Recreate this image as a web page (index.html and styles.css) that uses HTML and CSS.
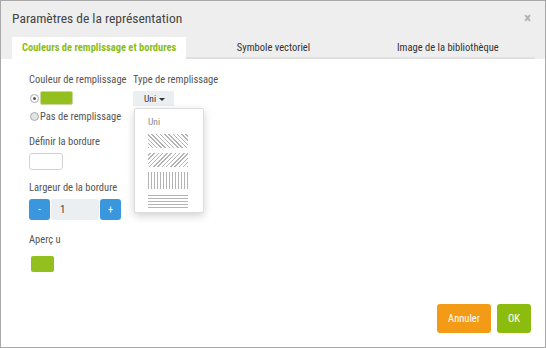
FILE: index.html
```html
<!DOCTYPE html>
<html>
<head>
    <title>Paramètres de la représentation</title>
    <link rel="stylesheet" href="styles.css">
</head>
<body>
    <div class="dialog">
        <div class="dialog-header">
            <div class="title-row">
                <span class="title">Paramètres de la représentation</span>
                <span class="close">&times;</span>
            </div>
            <div class="tabs">
                <div class="tab active">Couleurs de remplissage et bordures</div>
                <div class="tab">Symbole vectoriel</div>
                <div class="tab">Image de la bibliothèque</div>
            </div>
        </div>

        <div class="dialog-body">
            <div class="col-left">
                <div class="label">Couleur de remplissage</div>
                <div class="radio-row">
                    <span class="radio checked"></span>
                    <span class="swatch"></span>
                </div>
                <div class="radio-row">
                    <span class="radio"></span>
                    <span>Pas de remplissage</span>
                </div>

                <div class="label spaced">Définir la bordure</div>
                <div class="border-box"></div>

                <div class="label spaced">Largeur de la bordure</div>
                <div class="spinner">
                    <button class="spin-btn">-</button>
                    <div class="spin-value">1</div>
                    <button class="spin-btn">+</button>
                </div>

                <div class="label preview-label">Aperç u</div>
                <div class="preview"></div>
            </div>

            <div class="col-right">
                <div class="label">Type de remplissage</div>
                <div class="dropdown">
                    <span class="dropdown-toggle">Uni <span class="caret"></span></span>
                    <div class="dropdown-menu">
                        <div class="menu-item">Uni</div>
                        <div class="pattern diag-back"></div>
                        <div class="pattern diag-fwd"></div>
                        <div class="pattern vertical"></div>
                        <div class="pattern horizontal"></div>
                    </div>
                </div>
            </div>
        </div>

        <div class="dialog-footer">
            <button class="btn btn-cancel">Annuler</button>
            <button class="btn btn-ok">OK</button>
        </div>
    </div>
</body>
</html>
```

FILE: styles.css
```css
html, body {
    margin: 0;
    padding: 0;
}
body {
    font-family: "Roboto Condensed", "DejaVu Sans Condensed", Roboto, sans-serif;
    font-size: 10.5px;
    color: #555;
    background: #fff;
}
.dialog {
    width: 544px;
    height: 346px;
    border: 1px solid #a8a8a8;
    display: flex;
    flex-direction: column;
    background: #fff;
}
.dialog-header {
    background-color: #eeeeee;
    padding: 0 10px 0 11px;
}
.title-row {
    display: flex;
    justify-content: space-between;
    align-items: center;
    height: 33px;
    padding-bottom: 3px;
}
.title {
    font-size: 13.5px;
    color: #444;
}
.close {
    font-size: 15px;
    font-weight: bold;
    color: #b0b0b0;
    margin-right: 4px;
}
.tabs {
    display: flex;
}
.tab {
    flex: 1;
    height: 20px;
    line-height: 21px;
    text-align: center;
    white-space: nowrap;
    border-bottom: 2px solid #e0e0e0;
    color: #333;
}
.tab.active {
    background: #fff;
    color: #8cbd1a;
    font-weight: bold;
    border-bottom-color: #fff;
}
.dialog-body {
    flex: 1;
    display: flex;
    padding: 14px 0 0 28px;
    gap: 6px;
}
.col-left {
    width: 98px;
}
.label {
    height: 14px;
    line-height: 14px;
    white-space: nowrap;
}
.label.spaced {
    margin-top: 11px;
}
.label.preview-label {
    margin-top: 13px;
}
.radio-row {
    display: flex;
    align-items: center;
    height: 16px;
    margin-top: 3px;
    white-space: nowrap;
}
.radio-row + .radio-row {
    margin-top: 2px;
    margin-bottom: 2px;
}
.radio {
    flex-shrink: 0;
    width: 7px;
    height: 7px;
    border: 1px solid #aaa;
    border-radius: 50%;
    background: #e4e4e4;
    margin: 0 1px 0 1px;
    box-sizing: content-box;
    position: relative;
}
.radio.checked {
    background: #fff;
}
.radio.checked::after {
    content: "";
    position: absolute;
    left: 2px;
    top: 2px;
    width: 3px;
    height: 3px;
    border-radius: 50%;
    background: #555;
}
.swatch {
    width: 31px;
    height: 12px;
    background: #93c01f;
    border: 1px solid #c8d8a0;
    border-radius: 2px;
}
.border-box {
    width: 32px;
    height: 15px;
    margin-top: 4px;
    border: 1px solid #d0d4d8;
    border-radius: 3px;
}
.spinner {
    display: flex;
    margin-top: 4px;
    height: 21px;
}
.spin-btn {
    width: 21px;
    height: 21px;
    border: none;
    border-radius: 3px;
    background: #3a97dd;
    color: #fff;
    font-family: inherit;
    font-size: 10px;
    padding: 0;
}
.spin-value {
    width: 48px;
    margin: 0 1px;
    background: #eceff1;
    border-radius: 3px;
    line-height: 21px;
    padding-left: 9px;
    box-sizing: border-box;
    color: #444;
    font-size: 11px;
}
.preview {
    width: 23px;
    height: 16px;
    margin: 9px 0 0 2px;
    background: #93c01f;
    border-radius: 2px;
}
.col-right {
    width: 100px;
}
.dropdown {
    position: relative;
    margin-top: 4px;
}
.dropdown-toggle {
    display: inline-block;
    background: #eceff1;
    padding: 0 9px 0 11px;
    height: 15px;
    line-height: 15px;
    font-size: 9.5px;
    color: #333;
}
.caret {
    display: inline-block;
    width: 0;
    height: 0;
    border-left: 3px solid transparent;
    border-right: 3px solid transparent;
    border-top: 3px solid #333;
    vertical-align: middle;
    margin-left: 1px;
}
.dropdown-menu {
    position: absolute;
    left: 1px;
    top: 17px;
    width: 70px;
    height: 105px;
    background: #fff;
    border: 1px solid #ddd;
    border-radius: 2px;
    box-shadow: 0 3px 8px rgba(0, 0, 0, 0.18);
    box-sizing: border-box;
    padding: 7px 0 0 13px;
}
.menu-item {
    font-size: 9.5px;
    color: #888;
    height: 12px;
    line-height: 12px;
    margin-bottom: 6px;
}
.pattern {
    width: 40px;
    height: 14px;
    margin-bottom: 5px;
}
.diag-back {
    background: repeating-linear-gradient(45deg, #b4b4b4 0 1px, #fff 1px 3px);
}
.diag-fwd {
    background: repeating-linear-gradient(-45deg, #b4b4b4 0 1px, #fff 1px 3px);
}
.vertical {
    height: 17px;
    background: repeating-linear-gradient(90deg, #b4b4b4 0 1px, #fff 1px 3px);
}
.horizontal {
    height: 14px;
    background: repeating-linear-gradient(0deg, #b4b4b4 0 1px, #fff 1px 3px);
}
.dialog-footer {
    display: flex;
    justify-content: flex-end;
    gap: 6px;
    padding: 0 14px 14px 0;
}
.btn {
    height: 29px;
    border: none;
    border-radius: 3px;
    color: #fff;
    font-family: inherit;
    font-size: 10.5px;
}
.btn-cancel {
    width: 54px;
    background: #f39a17;
}
.btn-ok {
    width: 34px;
    background: #8cbd0e;
}
```
